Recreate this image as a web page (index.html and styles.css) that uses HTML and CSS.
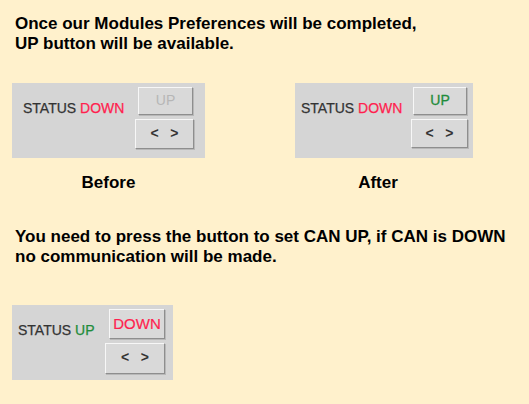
FILE: index.html
```html
<!DOCTYPE html>
<html>
<head>
<meta charset="utf-8">
<link rel="stylesheet" href="styles.css">
</head>
<body>
<p class="note">Once our Modules Preferences will be completed,<br>UP button will be available.</p>
<div class="compare">
  <div class="figure fig-before">
    <div class="panel">
      <span class="status">STATUS <span class="down">DOWN</span></span>
      <div class="buttons">
        <div class="btn btn-main disabled">UP</div>
        <div class="btn btn-nav">&lt;&nbsp;&nbsp;&nbsp;&gt;</div>
      </div>
    </div>
    <div class="caption">Before</div>
  </div>
  <div class="figure fig-after">
    <div class="panel">
      <span class="status">STATUS <span class="down">DOWN</span></span>
      <div class="buttons">
        <div class="btn btn-main up">UP</div>
        <div class="btn btn-nav">&lt;&nbsp;&nbsp;&nbsp;&gt;</div>
      </div>
    </div>
    <div class="caption">After</div>
  </div>
</div>
<p class="note note2">You need to press the button to set CAN UP, if CAN is DOWN<br>no communication will be made.</p>
<div class="figure fig-up">
  <div class="panel">
    <span class="status">STATUS <span class="up">UP</span></span>
    <div class="buttons">
      <div class="btn btn-main down">DOWN</div>
      <div class="btn btn-nav">&lt;&nbsp;&nbsp;&nbsp;&gt;</div>
    </div>
  </div>
</div>
</body>
</html>
```
FILE: styles.css
```css
html, body {
  margin: 0;
  padding: 0;
  background: #fff1cc;
}
body {
  font-family: "Liberation Sans", Arial, sans-serif;
  color: #000;
  width: 529px;
  height: 404px;
  overflow: hidden;
}
.note {
  margin: 0;
  padding: 14px 0 0 15px;
  font-weight: bold;
  font-size: 17px;
  line-height: 20px;
}
.compare {
  display: flex;
  gap: 90px;
  padding: 29px 0 0 12px;
}
.figure {
  display: flex;
  flex-direction: column;
}
.fig-before .panel { width: 193px; }
.fig-after .panel { width: 178px; }
.fig-up {
  padding: 38px 0 0 12px;
}
.fig-up .panel { width: 161px; }
.panel {
  box-sizing: border-box;
  height: 75px;
  background: #d5d5d5;
  display: flex;
  justify-content: space-between;
  padding: 4px 11px 0 11px;
}
.fig-after .panel { padding-left: 6px; padding-right: 5px; }
.fig-up .panel { padding-left: 6px; padding-right: 8px; }
.status {
  font-size: 14px;
  color: #333;
  margin-top: 13px;
  line-height: 16px;
  -webkit-text-stroke: 0.25px #333;
}
.down { color: #ff1f4f; -webkit-text-stroke-color: #ff1f4f; }
.up { color: #1f8c3b; -webkit-text-stroke-color: #1f8c3b; }
.buttons {
  display: flex;
  flex-direction: column;
  align-items: flex-end;
  gap: 4px;
}
.btn {
  box-sizing: border-box;
  background: #d9d9d9;
  border: 1px solid;
  border-color: #f7f7f7 #8e8e8e #8e8e8e #f7f7f7;
  box-shadow: 1px 1px 0 #b8b8b8;
  font-size: 14px;
  text-align: center;
  color: #333;
}
.btn.up { color: #1f8c3b; -webkit-text-stroke: 0.3px #1f8c3b; }
.btn.down { color: #ff1f4f; -webkit-text-stroke: 0.2px #ff1f4f; }
.btn-main {
  width: 55px;
  height: 28px;
  line-height: 24px;
  margin-right: 1px;
}
.btn-main.disabled { color: #b6b6b6; }
.btn-nav {
  width: 59px;
  height: 30px;
  line-height: 27px;
  font-weight: bold;
}
.fig-after .btn-main { width: 54px; height: 28px; }
.fig-after .btn-nav { width: 57px; height: 29px; }
.fig-up .btn-main { width: 56px; height: 30px; line-height: 27px; font-size: 15px; margin-right: 0; }
.fig-up .btn-nav { width: 60px; height: 31px; }
.caption {
  text-align: center;
  font-weight: bold;
  font-size: 17px;
  line-height: 20px;
  margin-top: 15px;
}
.fig-after .caption { margin-right: 12px; }
.note2 {
  padding-top: 34px;
}
```
